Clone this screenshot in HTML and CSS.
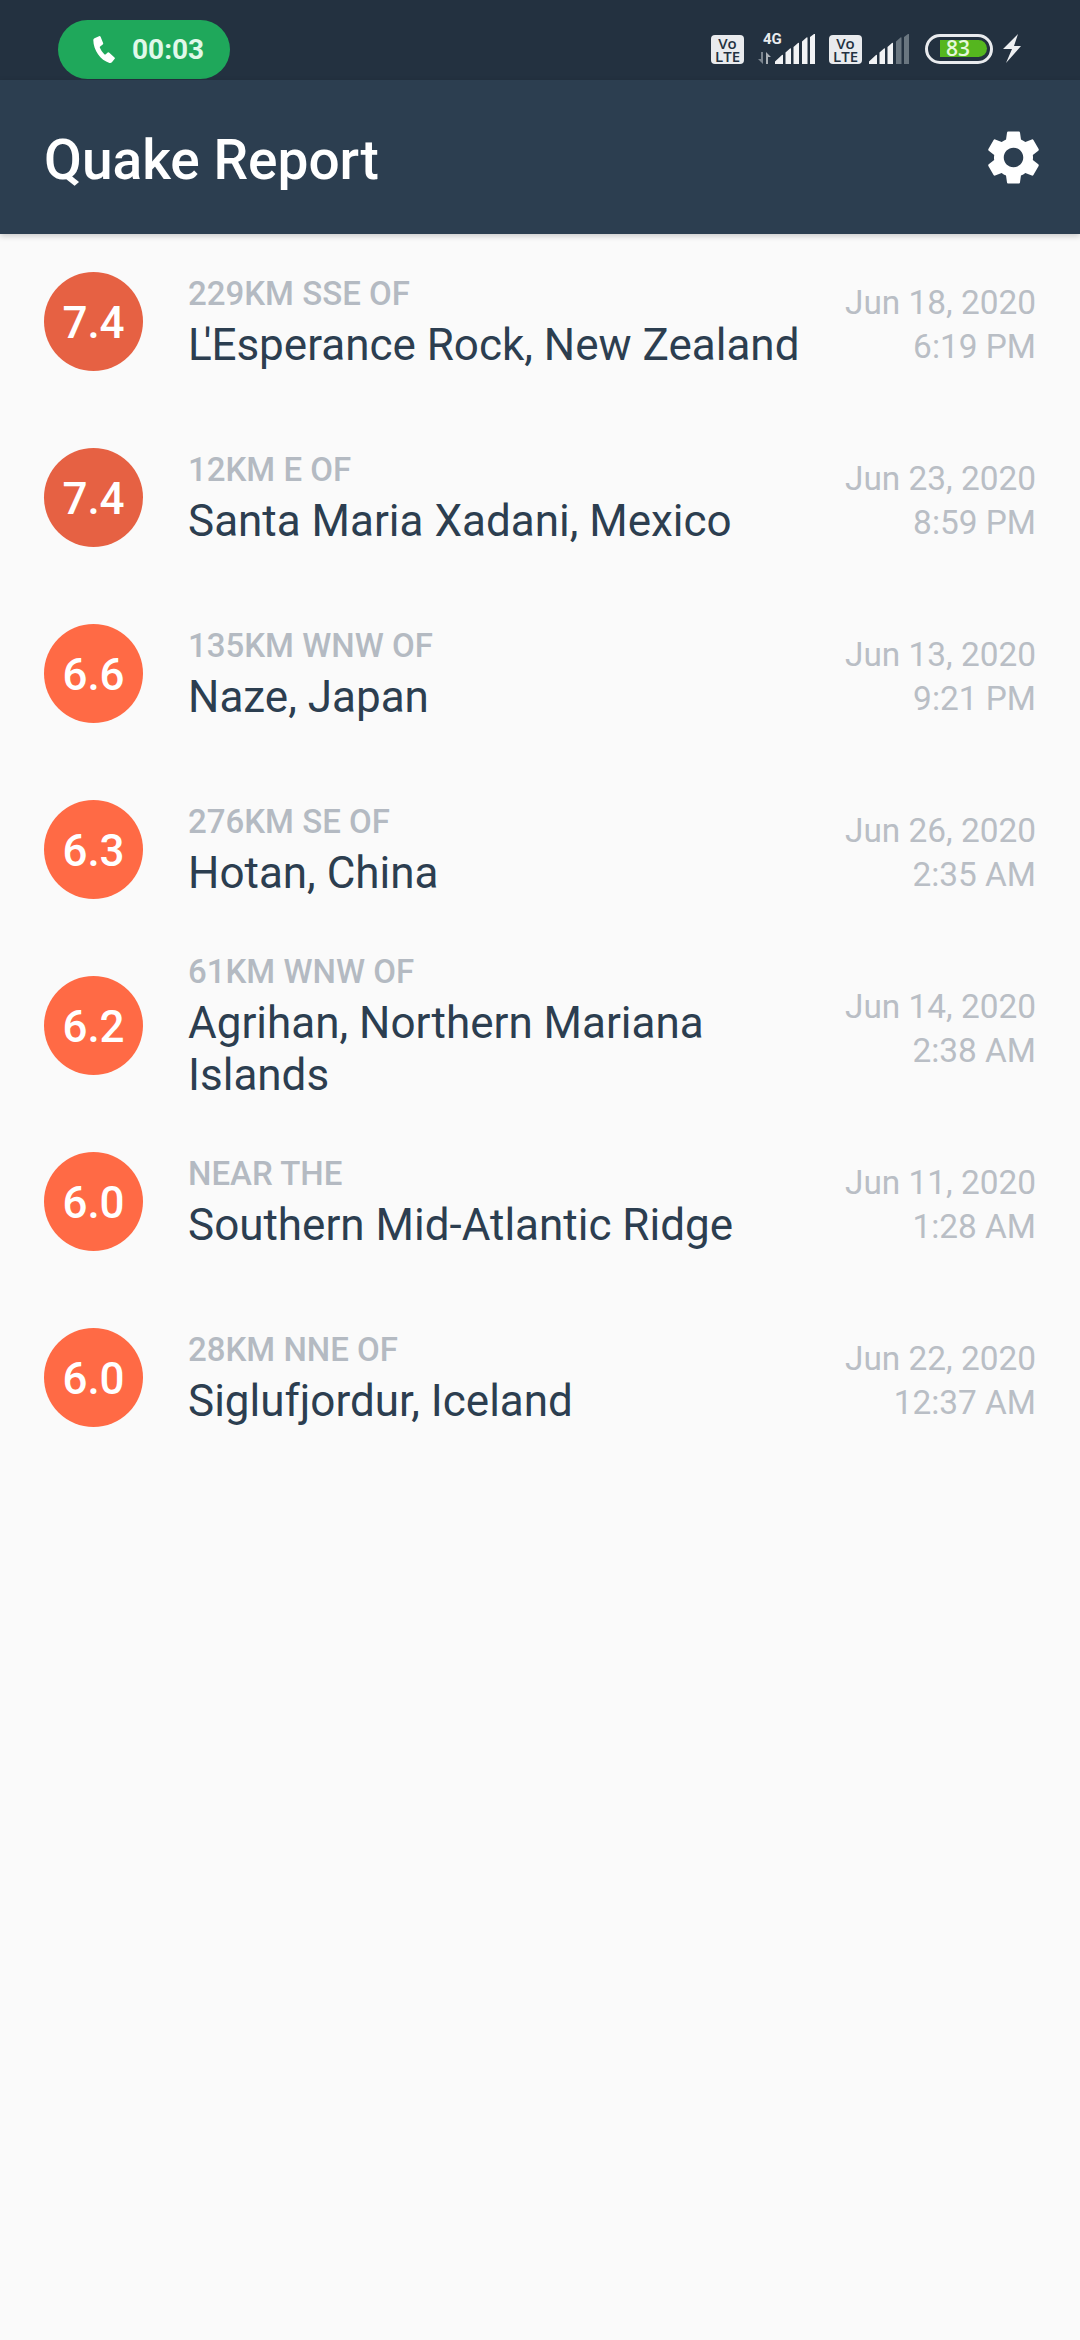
FILE: index.html
```html
<!DOCTYPE html>
<html>
<head>
    <link rel="stylesheet" href="styles.css">
</head>
<body>
    <div class="status-bar">
        <div class="call-pill">
            <svg class="call-icon" viewBox="0 0 22 27"><path d="M1.5 2.2L6 .2q1.2-.4 1.7.8l2.4 6q.4 1-.4 1.6L7.2 10.4q-.6.5-.3 1.3 1.4 3.6 4.4 6.6.6.5 1.2.1l2.2-1.8q.8-.6 1.6.1l5.2 4.8q.8.8 0 1.6l-2.4 2.9q-1 1.2-2.6.9C7.5 24.400 .4 14 .3 4q0-1.300 1.200-1.800z"/></svg>
            <span>00:03</span>
        </div>
        <div class="status-icons">
            <div class="volte">Vo LTE</div>
            <div class="net-type">
                <span class="net-label">4G</span>
                <svg class="net-arrows" viewBox="0 0 13 12"><path class="arrow-down" d="M3 0h2v12L0 7h3z"/><path class="arrow-up" d="M8 12V0l5 5h-3v7z"/></svg>
            </div>
            <svg class="signal" viewBox="0 0 40 30"><path d="M0 30v-2.500L7 21q1-.8 1 .5V30zM10.500 30V18.500l4.500-4q1-.8 1 .5V30zM18.500 30V13l4.500-4q1-.8 1 .5V30zM27 30V7.500l4.500-4q1-.8 1 .5V30zM35 30V3l4-3q1-.5 1 .5V30z"/></svg>
            <div class="volte second">Vo LTE</div>
            <svg class="signal signal-weak" viewBox="0 0 40 30"><path d="M0 30v-2.500L7 21q1-.8 1 .5V30zM10.500 30V18.500l4.500-4q1-.8 1 .5V30zM18.500 30V13l4.500-4q1-.8 1 .5V30z"/><path class="off" d="M27 30V7.500l4.500-4q1-.8 1 .5V30zM35 30V3l4-3q1-.5 1 .5V30z"/></svg>
            <div class="battery"><div class="battery-fill"><span>83</span></div></div>
            <svg class="bolt" viewBox="0 0 19 30"><path d="M15 0L0 15h9L3 29 18 12h-7z"/></svg>
        </div>
    </div>

    <div class="app-bar">
        <h1>Quake Report</h1>
        <svg class="settings" viewBox="0 0 24 24"><path d="M19.14 12.94c.04-.3.06-.61.06-.94 0-.32-.02-.64-.07-.94l2.03-1.58c.18-.14.23-.41.12-.61l-1.92-3.32c-.12-.22-.37-.29-.59-.22l-2.39.96c-.5-.38-1.03-.7-1.62-.94l-.36-2.54c-.04-.24-.24-.41-.48-.41h-3.84c-.24 0-.43.17-.47.41l-.36 2.54c-.59.24-1.13.57-1.62.94l-2.39-.96c-.22-.08-.47 0-.59.22L2.74 8.87c-.12.21-.08.47.12.61l2.03 1.58c-.05.3-.09.63-.09.94s.02.64.07.94l-2.03 1.58c-.18.14-.23.41-.12.61l1.92 3.32c.12.22.37.29.59.22l2.39-.96c.5.38 1.03.7 1.62.94l.36 2.54c.05.24.24.41.48.41h3.84c.24 0 .44-.17.47-.41l.36-2.54c.59-.24 1.13-.56 1.62-.94l2.39.96c.22.08.47 0 .59-.22l1.92-3.32c.12-.22.07-.47-.12-.61l-2.01-1.58zM12 15.6c-1.98 0-3.6-1.62-3.6-3.6s1.62-3.6 3.6-3.6 3.6 1.62 3.6 3.6-1.62 3.6-3.6 3.6z"/></svg>
    </div>

    <div class="quake-list">
        <div class="quake">
            <div class="mag strong">7.4</div>
            <div class="place">
                <div class="offset">229KM SSE OF</div>
                <div class="location"><span class="tight">L</span>'Esperance Rock, New Zealand</div>
            </div>
            <div class="when"><div>Jun 18, 2020</div><div>6:19 PM</div></div>
        </div>
        <div class="quake">
            <div class="mag strong">7.4</div>
            <div class="place">
                <div class="offset">12KM E OF</div>
                <div class="location">Santa Maria Xadani, Mexico</div>
            </div>
            <div class="when"><div>Jun 23, 2020</div><div>8:59 PM</div></div>
        </div>
        <div class="quake">
            <div class="mag">6.6</div>
            <div class="place">
                <div class="offset">135KM WNW OF</div>
                <div class="location">Naze, Japan</div>
            </div>
            <div class="when"><div>Jun 13, 2020</div><div>9:21 PM</div></div>
        </div>
        <div class="quake">
            <div class="mag">6.3</div>
            <div class="place">
                <div class="offset">276KM SE OF</div>
                <div class="location">Hotan, China</div>
            </div>
            <div class="when"><div>Jun 26, 2020</div><div>2:35 AM</div></div>
        </div>
        <div class="quake">
            <div class="mag">6.2</div>
            <div class="place">
                <div class="offset">61KM WNW OF</div>
                <div class="location">Agrihan, Northern Mariana Islands</div>
            </div>
            <div class="when"><div>Jun 14, 2020</div><div>2:38 AM</div></div>
        </div>
        <div class="quake">
            <div class="mag">6.0</div>
            <div class="place">
                <div class="offset">NEAR THE</div>
                <div class="location">Southern Mid-Atlantic Ridge</div>
            </div>
            <div class="when"><div>Jun 11, 2020</div><div>1:28 AM</div></div>
        </div>
        <div class="quake">
            <div class="mag">6.0</div>
            <div class="place">
                <div class="offset">28KM NNE OF</div>
                <div class="location">Siglufjordur, Iceland</div>
            </div>
            <div class="when"><div>Jun 22, 2020</div><div>12:37 AM</div></div>
        </div>
    </div>
</body>
</html>
```

FILE: styles.css
```css
* {
    box-sizing: border-box;
}

body {
    margin: 0;
    height: 2340px;
    overflow: hidden;
    background-color: #fafafa;
    font-family: Roboto, "Liberation Sans", sans-serif;
}

.status-bar {
    height: 80px;
    padding: 20px 58px 1px;
    display: flex;
    justify-content: space-between;
    background-color: #233140;
}

.call-pill {
    width: 172px;
    height: 59px;
    padding-left: 35px;
    display: flex;
    align-items: center;
    gap: 17px;
    border-radius: 30px;
    background-color: #1fa85b;
    color: #e0f8e9;
    font-size: 28px;
    font-weight: 700;
}

.call-icon {
    width: 22px;
    height: 27px;
    fill: #fff;
}

.status-icons {
    width: 311px;
    height: 30px;
    margin-top: 14px;
    display: flex;
    align-items: flex-start;
}

.volte {
    width: 33px;
    height: 29px;
    margin-top: 1px;
    padding: 2px 2px 0;
    border-radius: 4px;
    background-color: #e9ebee;
    color: #233140;
    font-family: "Open Sans", sans-serif;
    font-size: 15px;
    font-weight: 600;
    line-height: 13px;
    text-align: center;
}

.volte.second {
    margin-left: 14px;
}

.net-type {
    width: 17px;
    height: 30px;
    margin-left: 14px;
    display: flex;
    flex-direction: column;
}

.net-label {
    height: 18px;
    margin-left: 5px;
    color: #e9ebee;
    font-size: 15px;
    font-weight: 700;
    line-height: 16px;
    margin-top: -3px;
    white-space: nowrap;
}

.net-arrows {
    width: 13px;
    height: 12px;
    margin-top: 3px;
}

.arrow-down {
    fill: #7b858f;
}

.arrow-up {
    fill: #aab0b6;
}

.signal {
    width: 40px;
    height: 30px;
    fill: #f2f3f5;
}

.signal-weak {
    margin-left: 7px;
}

.signal .off {
    fill: #6a7680;
}

.battery {
    width: 68px;
    height: 30px;
    margin-left: 16px;
    padding: 3px 0 0 12px;
    border: 3px solid #e9ebee;
    border-radius: 15px;
}

.battery-fill {
    width: 47px;
    height: 17px;
    padding-left: 6px;
    border-radius: 0 9px 9px 0;
    background-color: #55b61f;
    color: #e6f8dc;
    font-family: "Open Sans", sans-serif;
    font-size: 21px;
    font-weight: 600;
    line-height: 17px;
}

.bolt {
    width: 19px;
    height: 30px;
    margin-left: 10px;
    fill: #eef0f2;
}

.app-bar {
    height: 154px;
    padding: 0 34px 0 44px;
    display: flex;
    align-items: center;
    justify-content: space-between;
    background-color: #2c3e50;
    box-shadow: 0 2px 6px rgba(0, 0, 0, 0.2);
    position: relative;
}

.app-bar h1 {
    margin: 0;
    padding-top: 5px;
    color: #fff;
    font-size: 55px;
    font-weight: 500;
}

.settings {
    width: 65px;
    height: 65px;
    fill: #fff;
}

.quake {
    height: 176px;
    padding: 0 44px;
    display: flex;
    align-items: center;
}

.mag {
    width: 99px;
    height: 99px;
    margin-bottom: 1px;
    padding-top: 3px;
    flex-shrink: 0;
    display: flex;
    align-items: center;
    justify-content: center;
    border-radius: 50%;
    background-color: #ff6a45;
    color: #fff;
    font-size: 44px;
    font-weight: 500;
}

.mag.strong {
    background-color: #e66143;
}

.place {
    flex: 1;
    margin-left: 45px;
    padding-bottom: 6px;
}

.offset {
    padding-top: 2px;
    color: #b4bac2;
    font-size: 33px;
    font-weight: 500;
    line-height: 50px;
}

.location {
    color: #2c3e50;
    font-size: 44px;
    line-height: 52px;
}

.tight {
    letter-spacing: -8px;
}

.when {
    flex-shrink: 0;
    padding-top: 5px;
    color: #b9bec5;
    font-size: 33.4px;
    line-height: 44px;
    text-align: right;
}
```
